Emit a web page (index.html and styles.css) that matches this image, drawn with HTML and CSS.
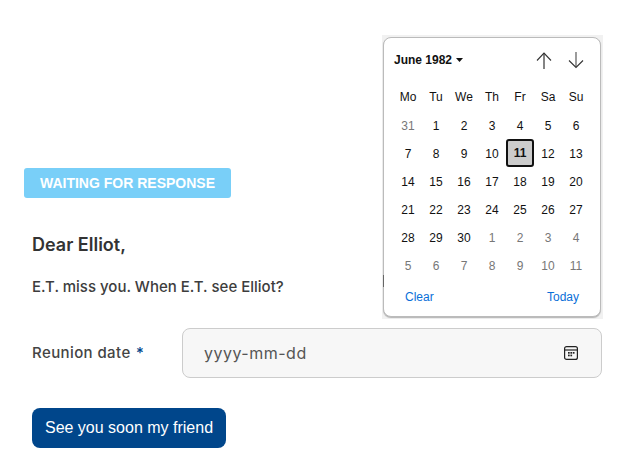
FILE: index.html
```html
<!DOCTYPE html>
<html lang="en">
<head>
<meta charset="utf-8">
<title>Reunion</title>
<link rel="stylesheet" href="styles.css">
</head>
<body>
<main class="page">
  <div class="badge">WAITING FOR RESPONSE</div>
  <form class="form">
    <h1 class="title">Dear Elliot,</h1>
    <p class="message">E.T. miss you. When E.T. see Elliot?</p>
    <div class="field">
      <label class="label">Reunion date <span class="req">*</span></label>
      <div class="input">
        <span class="placeholder">yyyy-mm-dd</span>
        <svg class="cal" width="16" height="16" viewBox="0 0 16 16" fill="none" stroke="#222" stroke-width="1.2"><rect x="1.6" y="1.6" width="12.8" height="12.8" rx="2"/><path d="M1.6 5h12.8"/><g fill="#222" stroke="none"><rect x="5" y="7" width="1.7" height="1.7"/><rect x="7.4" y="7" width="1.7" height="1.7"/><rect x="9.8" y="7" width="1.7" height="1.7"/><rect x="5" y="9.6" width="1.7" height="1.7"/><rect x="7.4" y="9.6" width="1.7" height="1.7"/></g></svg>
      </div>
    </div>
    <button class="submit" type="button">See you soon my friend</button>
  </form>
</main>
<div class="backdrop">
  <div class="picker">
    <div class="head">
      <span class="month">June 1982 <svg width="7" height="4" viewBox="0 0 7 4"><path d="M0 0h7L3.5 4z" fill="#111"/></svg></span>
      <div class="arrows">
        <svg width="16" height="17" viewBox="0 0 16 17" fill="none"><path d="M8 17V1" stroke="#777" stroke-width="1.8"/><path d="M1 8.500l7-7.500 7 7.500" stroke="#333" stroke-width="1.1"/></svg>
        <svg width="16" height="17" viewBox="0 0 16 17" fill="none"><path d="M8 0v15" stroke="#666" stroke-width="1.3"/><path d="M1 8.500l7 7 7-7" stroke="#333" stroke-width="1.1"/></svg>
      </div>
    </div>
    <div class="grid">
      <span class="dow">Mo</span><span class="dow">Tu</span><span class="dow">We</span><span class="dow">Th</span><span class="dow">Fr</span><span class="dow">Sa</span><span class="dow">Su</span>
      <span class="d off">31</span><span class="d">1</span><span class="d">2</span><span class="d">3</span><span class="d">4</span><span class="d">5</span><span class="d">6</span>
      <span class="d">7</span><span class="d">8</span><span class="d">9</span><span class="d">10</span><span class="d sel">11</span><span class="d">12</span><span class="d">13</span>
      <span class="d">14</span><span class="d">15</span><span class="d">16</span><span class="d">17</span><span class="d">18</span><span class="d">19</span><span class="d">20</span>
      <span class="d">21</span><span class="d">22</span><span class="d">23</span><span class="d">24</span><span class="d">25</span><span class="d">26</span><span class="d">27</span>
      <span class="d">28</span><span class="d">29</span><span class="d">30</span><span class="d off">1</span><span class="d off">2</span><span class="d off">3</span><span class="d off">4</span>
      <span class="d off">5</span><span class="d off">6</span><span class="d off">7</span><span class="d off">8</span><span class="d off">9</span><span class="d off">10</span><span class="d off">11</span>
    </div>
    <div class="foot"><span>Clear</span><span>Today</span></div>
  </div>
</div>
</body>
</html>
```

FILE: styles.css
```css
* { box-sizing: border-box; }
html, body { margin: 0; height: 100%; background: #fff; overflow: hidden; }
body { font-family: "Liberation Sans", Arial, sans-serif; }
.page { padding: 168px 36px 0 24px; }
.badge {
  width: 207px; height: 30px; line-height: 30px; text-align: center;
  background: #79cff8; color: #fff; border-radius: 3px;
  font-size: 14px; font-weight: 700;
}
.form { padding: 0 0 0 8px; }
.title {
  margin: 33px 0 0; font: 600 18px/28px Inter, "Noto Sans", sans-serif; color: #333;
}
.message {
  margin: 16px 0 0; font: 500 15px/24px Inter, "Noto Sans", sans-serif; color: #3d3d3d;
}
.field { display: flex; align-items: center; margin-top: 29px; }
.label { width: 150px; font: 500 15px/24px Inter, "Noto Sans", sans-serif; color: #444; letter-spacing: .4px; }
.req { color: #00468b; margin-left: 1px; }
.input {
  flex: 1; height: 50px; display: flex; align-items: center; justify-content: space-between;
  padding: 0 22px 0 21px;
  background: #f7f7f7; border: 1px solid #ccc; border-radius: 8px;
}
.placeholder { font: 400 16px/24px Inter, "Noto Sans", sans-serif; color: #555; letter-spacing: .5px; }
.submit {
  display: block; margin-top: 30px; width: 194px; height: 40px;
  background: #00468b; color: #fff; border: 0; border-radius: 8px;
  font: 400 16px/20px "Liberation Sans", Arial, sans-serif; padding: 0;
}
.backdrop {
  position: absolute; left: 382px; top: 35px; width: 221px; height: 284px;
  background: #f1f1f1; padding: 2px 2px 2px 1px;
}
.backdrop::before {
  content: ""; position: absolute; left: 1px; top: 240px; width: 1px; height: 12px; background: #666;
}
.picker {
  height: 100%; background: #fff; border: 1px solid #bbb; border-radius: 8px;
  box-shadow: 0 1px 1px rgba(0,0,0,.25);
  color: #111; display: flex; flex-direction: column;
}
.head { display: flex; justify-content: space-between; align-items: center; height: 44px; padding: 0 16px 0 10px; }
.month { font-size: 12px; font-weight: 700; display: flex; align-items: center; gap: 4px; white-space: nowrap; }
.arrows { display: flex; gap: 16px; }
.grid { display: grid; grid-template-columns: repeat(7, 28px); grid-auto-rows: 28px; margin: 1px 0 0 10px; align-items: center; justify-items: center; font-size: 12px; }
.d, .dow { display: flex; align-items: center; justify-content: center; width: 28px; height: 28px; }
.d { padding-top: 1px; }
.off { color: #777; }
.sel { background: #ccc; border: 2px solid #111; border-radius: 3px; font-weight: 700; padding-top: 0; }
.foot { display: flex; justify-content: space-between; padding: 11px 21px 0 21px; font-size: 12px; color: #0a6fd8; }
```
